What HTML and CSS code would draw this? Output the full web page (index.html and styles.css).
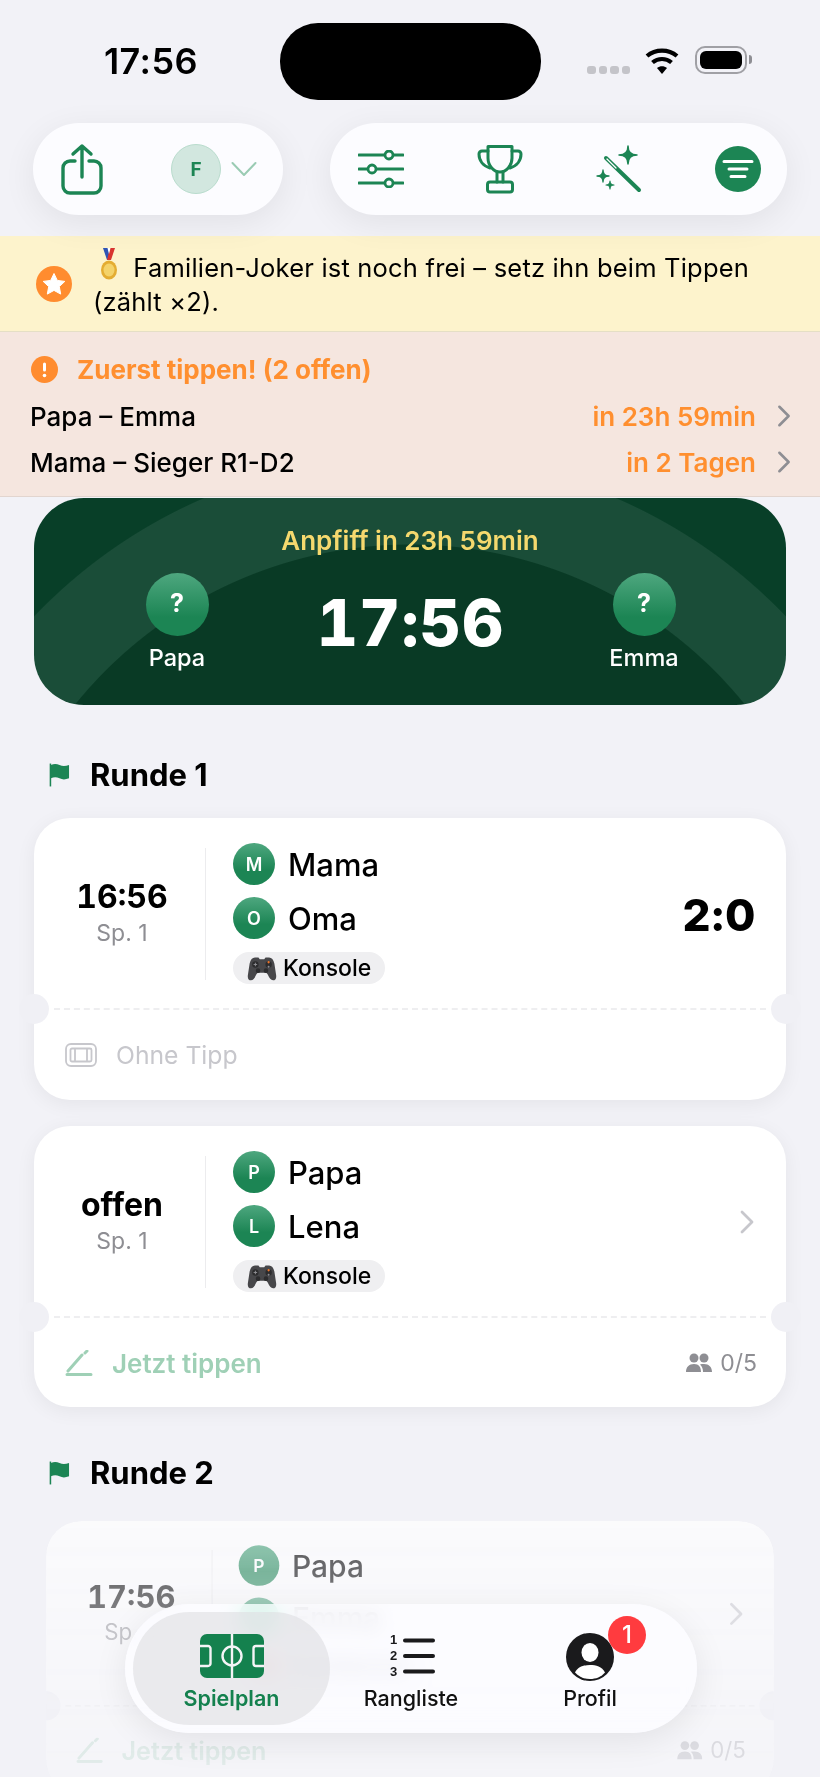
FILE: index.html
```html
<!DOCTYPE html>
<html lang="de">
<head>
<meta charset="utf-8">
<title>Spielplan</title>
<link rel="stylesheet" href="styles.css">
</head>
<body>
<svg class="defs" width="0" height="0" aria-hidden="true">
  <defs>
    <symbol id="pad" viewBox="0 0 34 34">
      <path d="M9 5h4l1.500 2h5L21 5h4c3 0 5 2.500 6 7l2 13c.6 4-1 6-3.500 6-2.500 0-4-2.500-6-6.500-.8-1.600-1.800-2-3.500-2h-6c-1.700 0-2.700.4-3.500 2-2 4-3.500 6.500-6 6.500C2 31 .4 29 1 25l2-13c1-4.500 3-7 6-7z" fill="#47474a"/>
      <circle cx="9.500" cy="13" r="3.600" fill="#2c2c2e"/>
      <circle cx="24.500" cy="13" r="3.600" fill="#2c2c2e"/>
      <circle cx="24.500" cy="10.500" r="1.300" fill="#f0762a"/>
      <circle cx="24.500" cy="15.500" r="1.100" fill="#8e8e93"/>
      <path d="M9.500 11v4M7.500 13h4" stroke="#8e8e93" stroke-width="1.100"/>
      <circle cx="12.500" cy="20" r="2.600" fill="#2c2c2e"/>
      <circle cx="21.500" cy="20" r="2.600" fill="#2c2c2e"/>
    </symbol>
    <symbol id="chev" viewBox="0 0 16 26">
      <path d="M3 3l10 10L3 23" fill="none" stroke="currentColor" stroke-width="2.800" stroke-linecap="round" stroke-linejoin="round"/>
    </symbol>
    <symbol id="flag" viewBox="0 0 22 24">
      <path d="M1.500 0v24" stroke="#1c8554" stroke-width="1.600"/>
      <path d="M2 1.500c3-1.500 6-1.500 9 0s6 1.500 10 0v14c-4 1.500-7 1.500-10 0s-6-1.500-9 0z" fill="#1c8554"/>
    </symbol>
  </defs>
</svg>

<header class="status">
  <span class="clock">17:56</span>
  <div class="island"></div>
  <div class="status-right">
    <div class="dots"><i></i><i></i><i></i><i></i></div>
    <svg class="wifi" viewBox="0 0 36 28"><path d="M18 27l-5-6c3-2.400 7-2.400 10 0z" fill="#000"/><path d="M8.500 15.500c5.500-4.700 13.500-4.700 19 0M3 9c8.500-7.300 21.500-7.300 30 0" fill="none" stroke="#000" stroke-width="4.200"/></svg>
    <div class="battery"><div class="battery-fill"></div></div>
    <div class="battery-nub"></div>
  </div>
</header>

<nav class="toolbar">
  <div class="pill pill-left">
    <svg class="ic-share" viewBox="0 0 44 54"><path d="M15 18H10a7 7 0 0 0-7 7v18a7 7 0 0 0 7 7h24a7 7 0 0 0 7-7V25a7 7 0 0 0-7-7h-5M22 34V3M13 11l9-8 9 8" fill="none" stroke="#1c8554" stroke-width="3.400" stroke-linecap="round" stroke-linejoin="round"/></svg>
    <div class="pill-user">
      <div class="user-avatar">F</div>
      <svg class="ic-down" viewBox="0 0 26 16"><path d="M1.500 2L13 14 24.500 2" fill="none" stroke="#9acbb3" stroke-width="2" stroke-linecap="round" stroke-linejoin="round"/></svg>
    </div>
  </div>
  <div class="pill pill-right">
    <svg class="ic-sliders" viewBox="0 0 46 38"><path d="M1 5h44M1 19h44M1 33h44" stroke="#1c8554" stroke-width="3" stroke-linecap="round"/><g fill="#fcfcff" stroke="#1c8554" stroke-width="2.800"><circle cx="31" cy="5" r="4"/><circle cx="14" cy="19" r="4"/><circle cx="31" cy="33" r="4"/></g></svg>
    <svg class="ic-trophy" viewBox="0 0 46 50"><g fill="none" stroke="#1c8554" stroke-width="3" stroke-linejoin="round" stroke-linecap="round"><path d="M11 2.500h24V14c0 8-6 14-12 14S11 22 11 14z"/><path d="M11 7H5a3 3 0 0 0-3 3c0 6.500 4 12 11 14M35 7h6a3 3 0 0 1 3 3c0 6.500-4 12-11 14"/><path d="M20 28v10M26 28v10"/><rect x="10.500" y="38" width="25" height="10" rx="2.500"/></g></svg>
    <svg class="ic-wand" viewBox="0 0 46 48"><path d="M10 13l33 32" stroke="#1c8554" stroke-width="4" stroke-linecap="round"/><path d="M11 14l9 9" stroke="#fcfcff" stroke-width="1.200" stroke-linecap="round"/><path d="M32 1Q32 10 41 10Q32 10 32 19Q32 10 23 10Q32 10 32 1z" fill="#1c8554" stroke="#1c8554" stroke-width="1.500" stroke-linejoin="round"/><path d="M7 25Q7 31 13 31Q7 31 7 37Q7 31 1 31Q7 31 7 25z" fill="#1c8554" stroke="#1c8554" stroke-width="1.300" stroke-linejoin="round"/><path d="M14 36Q14 40 18 40Q14 40 14 44Q14 40 10 40Q14 40 14 36z" fill="#1c8554" stroke="#1c8554" stroke-width="1.100" stroke-linejoin="round"/></svg>
    <svg class="ic-filter" viewBox="0 0 46 46"><circle cx="23" cy="23" r="23" fill="#1c8554"/><path d="M9 15.500h28M14 23h18M16 30.500h14" stroke="#fff" stroke-width="3" stroke-linecap="round"/></svg>
  </div>
</nav>

<section class="banner">
  <svg class="ic-star" viewBox="0 0 36 36"><circle cx="18" cy="18" r="18" fill="#ff8c2f"/><path d="M18 7.500l3.300 6.900 7.500 1-5.500 5.200 1.400 7.500-6.700-3.700-6.700 3.700 1.400-7.500-5.500-5.200 7.500-1z" fill="#fff" stroke="#fff" stroke-width="1" stroke-linejoin="round"/></svg>
  <p class="banner-text"><svg class="ic-medal" viewBox="0 0 20 32"><path d="M4 0h5l3 12H8z" fill="#2f55b5"/><path d="M16 0h-5L8 12h4z" fill="#d8342f"/><path d="M8.500 0h3l-1.500 6z" fill="#fff"/><ellipse cx="10" cy="22" rx="8" ry="9.500" fill="#e4ad32"/><ellipse cx="10" cy="22" rx="5.500" ry="6.500" fill="#f4d36a"/></svg> Familien-Joker ist noch frei – setz ihn beim Tippen (zählt ×2).</p>
</section>

<section class="alert">
  <div class="alert-title">
    <svg class="ic-excl" viewBox="0 0 27 27"><circle cx="13.500" cy="13.500" r="13.500" fill="#ff8c2f"/><rect x="12" y="6.500" width="3" height="9" rx="1.500" fill="#fff"/><circle cx="13.500" cy="19.500" r="1.800" fill="#fff"/></svg>
    <span>Zuerst tippen! (2 offen)</span>
  </div>
  <div class="alert-row"><span class="alert-name">Papa – Emma</span><span class="alert-when">in 23h 59min</span><svg class="alert-chev"><use href="#chev"/></svg></div>
  <div class="alert-row"><span class="alert-name">Mama – Sieger R1-D2</span><span class="alert-when">in 2 Tagen</span><svg class="alert-chev"><use href="#chev"/></svg></div>
</section>

<section class="hero">
  <div class="hero-title">Anpfiff in 23h 59min</div>
  <div class="hero-row">
    <div class="hero-player"><div class="hero-avatar">?</div><span>Papa</span></div>
    <div class="hero-time">17:56</div>
    <div class="hero-player"><div class="hero-avatar">?</div><span>Emma</span></div>
  </div>
</section>

<h2 class="round round-one"><svg class="ic-flag"><use href="#flag"/></svg>Runde 1</h2>

<article class="card">
  <div class="card-main">
    <div class="when"><div class="when-time">16:56</div><div class="when-sub">Sp. 1</div></div>
    <div class="players">
      <div class="player"><div class="avatar">M</div><span>Mama</span></div>
      <div class="player"><div class="avatar">O</div><span>Oma</span></div>
      <div class="chip"><svg class="ic-pad"><use href="#pad"/></svg>Konsole</div>
    </div>
    <div class="score">2:0</div>
  </div>
  <div class="card-foot">
    <svg class="ic-ticket" viewBox="0 0 32 24"><g fill="none" stroke="#c7c7cc" stroke-width="1.800"><rect x="1" y="1" width="30" height="22" rx="5"/><rect x="5.500" y="5.500" width="21" height="13" rx="1.500"/><path d="M10 5.500v13M22 5.500v13"/></g></svg>
    <span class="foot-none">Ohne Tipp</span>
  </div>
</article>

<article class="card card-next">
  <div class="card-main">
    <div class="when"><div class="when-time">offen</div><div class="when-sub">Sp. 1</div></div>
    <div class="players">
      <div class="player"><div class="avatar">P</div><span>Papa</span></div>
      <div class="player"><div class="avatar">L</div><span>Lena</span></div>
      <div class="chip"><svg class="ic-pad"><use href="#pad"/></svg>Konsole</div>
    </div>
    <svg class="card-chev"><use href="#chev"/></svg>
  </div>
  <div class="card-foot">
    <svg class="ic-pen" viewBox="0 0 28 26"><path d="M3 21L17 5M2 24.500h24M22 1l-2 2" fill="none" stroke="#9fd0b6" stroke-width="3" stroke-linecap="round"/></svg>
    <span class="foot-go">Jetzt tippen</span>
    <span class="foot-count"><svg class="ic-people" viewBox="0 0 26 20"><circle cx="8" cy="5" r="4.500" fill="#8e8e93"/><circle cx="18" cy="5" r="4.500" fill="#8e8e93"/><path d="M0 19c0-5 3-8 8-8s7 3 7 8zM17 19c0-3-1-6-3-7.500 1-.4 2.500-.5 4-.5 5 0 8 3 8 8z" fill="#8e8e93"/></svg>0/5</span>
  </div>
</article>

<h2 class="round round-two"><svg class="ic-flag"><use href="#flag"/></svg>Runde 2</h2>

<article class="card card-fade">
  <div class="card-main">
    <div class="when"><div class="when-time">17:56</div><div class="when-sub">Sp. 2</div></div>
    <div class="players">
      <div class="player"><div class="avatar">P</div><span>Papa</span></div>
      <div class="player"><div class="avatar">E</div><span>Emma</span></div>
      <div class="chip"><i class="paddle"></i>Tischtennis</div>
    </div>
    <svg class="card-chev"><use href="#chev"/></svg>
  </div>
  <div class="card-foot">
    <svg class="ic-pen" viewBox="0 0 28 26"><path d="M3 21L17 5M2 24.500h24M22 1l-2 2" fill="none" stroke="#9fd0b6" stroke-width="3" stroke-linecap="round"/></svg>
    <span class="foot-go">Jetzt tippen</span>
    <span class="foot-count"><svg class="ic-people" viewBox="0 0 26 20"><circle cx="8" cy="5" r="4.500" fill="#8e8e93"/><circle cx="18" cy="5" r="4.500" fill="#8e8e93"/><path d="M0 19c0-5 3-8 8-8s7 3 7 8zM17 19c0-3-1-6-3-7.500 1-.4 2.500-.5 4-.5 5 0 8 3 8 8z" fill="#8e8e93"/></svg>0/5</span>
  </div>
</article>

<nav class="tabbar">
  <div class="tab tab-active">
    <svg class="ic-pitch" viewBox="0 0 64 44"><rect width="64" height="44" rx="7" fill="#14814e"/><g fill="none" stroke="#f4f4f6" stroke-width="2.400"><path d="M32 0v44"/><circle cx="32" cy="22" r="9.500"/><path d="M0 12h8a2.500 2.500 0 0 1 2.500 2.500v15A2.500 2.500 0 0 1 8 32H0M64 12h-8a2.500 2.500 0 0 0-2.500 2.500v15A2.500 2.500 0 0 0 56 32h8"/></g></svg>
    <span>Spielplan</span>
  </div>
  <div class="tab">
    <div class="rank">
      <div class="rank-nums">1<br>2<br>3</div>
      <svg class="ic-rank" viewBox="0 0 34 44"><path d="M3 6.500h28M3 22h28M3 37.500h28" stroke="#1a1a1c" stroke-width="4" stroke-linecap="round"/></svg>
    </div>
    <span>Rangliste</span>
  </div>
  <div class="tab tab-profile">
    <svg class="ic-user" viewBox="0 0 48 48"><circle cx="24" cy="24" r="24" fill="#1a1a1c"/><ellipse cx="24" cy="19.500" rx="8.500" ry="9.500" fill="#fff"/><path d="M9 39.500C12 33.500 18 32 24 32s12 1.500 15 7.500C35 44 30 46 24 46s-11-2-15-6.500z" fill="#fff"/></svg>
    <span>Profil</span>
    <div class="badge">1</div>
  </div>
</nav>
</body>
</html>
```
FILE: styles.css
```css
* { box-sizing: border-box; }
html, body { margin: 0; padding: 0; }
body {
  position: relative;
  width: 820px;
  height: 1777px;
  overflow: hidden;
  background: #f2f2f7;
  font-family: Inter, "Liberation Sans", sans-serif;
  color: #000;
}
.defs { position: absolute; }

/* status bar */
.status {
  position: relative;
  height: 123px;
  display: flex;
  justify-content: space-between;
  padding: 44px 68px 0 104px;
}
.clock { font-size: 36px; font-weight: 600; line-height: 34px; letter-spacing: 0.4px; }
.island {
  position: absolute;
  left: 280px;
  top: 23px;
  width: 261px;
  height: 77px;
  border-radius: 38px;
  background: #000;
}
.status-right { display: flex; align-items: flex-start; }
.dots { display: flex; gap: 3px; margin-top: 22px; margin-right: 14px; }
.dots i { width: 8.500px; height: 8px; border-radius: 3px; background: #c4c4c9; }
.wifi { width: 36px; height: 28px; margin-top: 3px; margin-right: 15px; }
.battery {
  width: 52px;
  height: 28px;
  margin-top: 2px;
  padding: 3px;
  border: 2px solid #a0a0a5;
  border-radius: 10px;
}
.battery-fill { width: 100%; height: 100%; background: #000; border-radius: 6px; }
.battery-nub { width: 3px; height: 9px; margin: 11px 0 0 2px; background: #8e8e93; border-radius: 0 3px 3px 0; }

/* toolbar */
.toolbar {
  display: flex;
  justify-content: space-between;
  padding: 0 33px;
  margin-bottom: 21px;
}
.pill {
  height: 92px;
  border-radius: 46px;
  background: #fcfcff;
  box-shadow: 0 8px 34px rgba(0, 0, 0, 0.07);
  display: flex;
  align-items: center;
}
.pill-left { width: 250px; padding: 0 26px 0 27px; justify-content: space-between; }
.pill-right { width: 457px; padding: 0 26px 0 28px; justify-content: space-between; }
.pill-user { display: flex; align-items: center; gap: 10px; }
.user-avatar {
  width: 50px;
  height: 50px;
  border-radius: 50%;
  background: #d2e7df;
  border: 1px solid #b9dccd;
  color: #1c8554;
  font-size: 19px;
  font-weight: 700;
  display: flex;
  align-items: center;
  justify-content: center;
}
.ic-share { width: 44px; height: 54px; margin-top: 1px; }
.ic-down { width: 26px; height: 16px; }
.ic-sliders { width: 46px; height: 38px; }
.ic-trophy { width: 46px; height: 50px; }
.ic-wand { width: 46px; height: 48px; }
.ic-filter { width: 46px; height: 46px; }

/* banners */
.banner {
  height: 96px;
  display: flex;
  align-items: center;
  gap: 21px;
  padding: 0 60px 0 36px;
  background: #fdf3cc;
  border-bottom: 1px solid #e5dfc5;
}
.ic-star { width: 36px; height: 36px; flex: none; }
.banner-text { margin: 0; font-size: 25.500px; line-height: 34px; letter-spacing: 0.2px; }
.ic-medal { width: 20px; height: 32px; margin: 0 7px 0 6px; vertical-align: -3px; }

.alert {
  height: 165px;
  padding: 24px 28px 0 30px;
  background: #f5e6df;
  border-bottom: 1px solid #e2d5cf;
}
.alert-title {
  display: flex;
  align-items: center;
  gap: 19px;
  height: 27px;
  margin-bottom: 10px;
  font-size: 26px;
  font-weight: 700;
  color: #ff8f2f;
}
.ic-excl { width: 27px; height: 27px; margin-left: 1px; }
.alert-row { display: flex; align-items: center; height: 46px; font-size: 26px; }
.alert-name { flex: 1; font-weight: 500; }
.alert-when { color: #ff8f2f; font-weight: 600; }
.alert-chev { width: 16px; height: 24px; margin: 0 0 0 20px; color: #8e8e93; }

/* hero */
.hero {
  height: 207px;
  margin: 1px 34px 0;
  border-radius: 50px;
  color: #fff;
  text-align: center;
  padding-top: 28px;
  background: radial-gradient(circle at 50% 477px, #093a25 0, #093a25 430px, #1a4d38 431px, #1a4d38 519px, #083f28 520px);
}
.hero-title { font-size: 26px; line-height: 30px; font-weight: 600; color: #f5d96e; }
.hero-row {
  display: flex;
  justify-content: space-between;
  align-items: flex-start;
  padding: 2px 106px 0 107px;
  margin-top: 15px;
}
.hero-player { width: 72px; display: flex; flex-direction: column; align-items: center; gap: 8px; font-size: 23.500px; font-weight: 500; line-height: 28px; }
.hero-avatar {
  width: 63px;
  height: 63px;
  border-radius: 50%;
  background: linear-gradient(#4ea77f, #1c8554 70%);
  font-size: 25px;
  font-weight: 700;
  display: flex;
  align-items: center;
  justify-content: center;
  padding-bottom: 4px;
}
.hero-time { font-size: 64px; line-height: 70px; font-weight: 800; margin-top: 15px; letter-spacing: 1px; font-variant-numeric: tabular-nums; }

/* rounds */
.round {
  margin: 0;
  display: flex;
  align-items: center;
  gap: 20px;
  padding-left: 49px;
  font-size: 31px;
  line-height: 36px;
  font-weight: 700;
}
.round-one { margin-top: 52px; margin-bottom: 25px; }
.round-two { margin-top: 48px; margin-bottom: 30px; }
.ic-flag { width: 21px; height: 24px; }

/* match cards */
.card {
  position: relative;
  width: 752px;
  height: 282px;
  margin: 0 34px;
  background: #fff;
  border-radius: 36px;
  box-shadow: 0 4px 20px rgba(0, 0, 0, 0.06);
}
.card-next { margin-top: 26px; height: 281px; }
.card::before, .card::after {
  content: "";
  position: absolute;
  top: 176px;
  width: 30px;
  height: 30px;
  border-radius: 50%;
  background: #f0f0f5;
}
.card::before { left: -15px; }
.card::after { right: -15px; }
.card-main {
  height: 192px;
  margin: 0 20px;
  padding: 25px 11px 0 0;
  display: flex;
  align-items: flex-start;
  border-bottom: 2px dashed #eeeef0;
}
.when {
  width: 172px;
  margin-left: -20px;
  padding-left: 5px;
  height: 132px;
  margin-top: 5px;
  border-right: 1px solid #ececee;
  text-align: center;
  padding-top: 31px;
  flex: none;
}
.when-time { font-size: 32px; line-height: 36px; font-weight: 700; font-variant-numeric: tabular-nums; }
.when-sub { font-size: 23px; line-height: 28px; color: #8e8e93; margin-top: 4px; }
.players { margin-left: 27px; flex: 1; }
.player { display: flex; align-items: center; gap: 13px; height: 42px; margin-bottom: 12px; font-size: 31px; font-weight: 500; }
.avatar {
  width: 42px;
  height: 42px;
  border-radius: 50%;
  background: linear-gradient(#4ea77f, #1c8554 65%);
  color: #fff;
  font-size: 18px;
  font-weight: 600;
  display: flex;
  align-items: center;
  justify-content: center;
}
.chip {
  display: inline-flex;
  align-items: center;
  gap: 6px;
  height: 32px;
  margin-top: 1px;
  padding: 0 14px;
  border-radius: 16px;
  background: #efeff1;
  font-size: 23px;
  font-weight: 500;
}
.ic-pad { width: 30px; height: 30px; }
.paddle { width: 26px; height: 26px; border-radius: 50%; background: #e8463e; }
.score { align-self: center; font-size: 44px; font-weight: 800; letter-spacing: -0.5px; margin-top: -21px; }
.card-chev { align-self: center; width: 16px; height: 26px; color: #c7c7cc; margin-top: -23px; }
.card-foot { height: 90px; display: flex; align-items: center; padding: 0 29px 0 31px; }
.ic-ticket { width: 32px; height: 24px; margin-right: 19px; }
.foot-none { font-size: 24.700px; color: #c7c7cc; }
.ic-pen { width: 28px; height: 26px; margin-right: 19px; }
.foot-go { flex: 1; font-size: 26px; font-weight: 600; color: #9fd0b6; }
.foot-count { display: flex; align-items: center; gap: 8px; font-size: 23px; color: #8e8e93; }
.ic-people { width: 26px; height: 20px; }

.card-fade {
  transform: scale(0.968);
  transform-origin: 50% 0;
  opacity: 0.9;
  -webkit-mask-image: linear-gradient(rgba(0, 0, 0, 0.72), rgba(0, 0, 0, 0.16));
  mask-image: linear-gradient(rgba(0, 0, 0, 0.72), rgba(0, 0, 0, 0.16));
}

/* tab bar */
.tabbar {
  position: absolute;
  left: 125px;
  top: 1604px;
  width: 572px;
  height: 129px;
  padding: 8px;
  border-radius: 65px;
  background: rgba(253, 253, 255, 0.82);
  -webkit-backdrop-filter: blur(10px) saturate(300%);
  backdrop-filter: blur(10px) saturate(300%);
  box-shadow: 0 8px 34px rgba(0, 0, 0, 0.08);
  display: flex;
}
.tab {
  position: relative;
  width: 162px;
  height: 113px;
  display: flex;
  flex-direction: column;
  align-items: center;
  justify-content: flex-end;
  padding-bottom: 14px;
  font-size: 21.500px;
  line-height: 26px;
  font-weight: 500;
  color: #111;
}
.tab > svg, .rank { margin-bottom: 7px; }
.tab-active {
  width: 197px;
  border-radius: 57px;
  background: rgba(222, 222, 225, 0.6);
  color: #14814e;
  font-weight: 600;
}
.tab-profile { width: 196px; }
.ic-pitch { width: 64px; height: 44px; }
.rank { display: flex; align-items: center; gap: 1px; height: 44px; }
.rank-nums { width: 15px; font-family: "Liberation Sans", sans-serif; font-size: 13px; line-height: 16px; font-weight: 700; text-align: center; color: #1a1a1c; }
.ic-rank { width: 34px; height: 44px; }
.tab > .ic-user { width: 48px; height: 48px; margin-bottom: 4px; }
.badge {
  position: absolute;
  left: 116px;
  top: 4px;
  width: 38px;
  height: 38px;
  border-radius: 50%;
  background: #ff3b3f;
  color: #fff;
  font-size: 24px;
  font-weight: 500;
  display: flex;
  align-items: center;
  justify-content: center;
}
```
